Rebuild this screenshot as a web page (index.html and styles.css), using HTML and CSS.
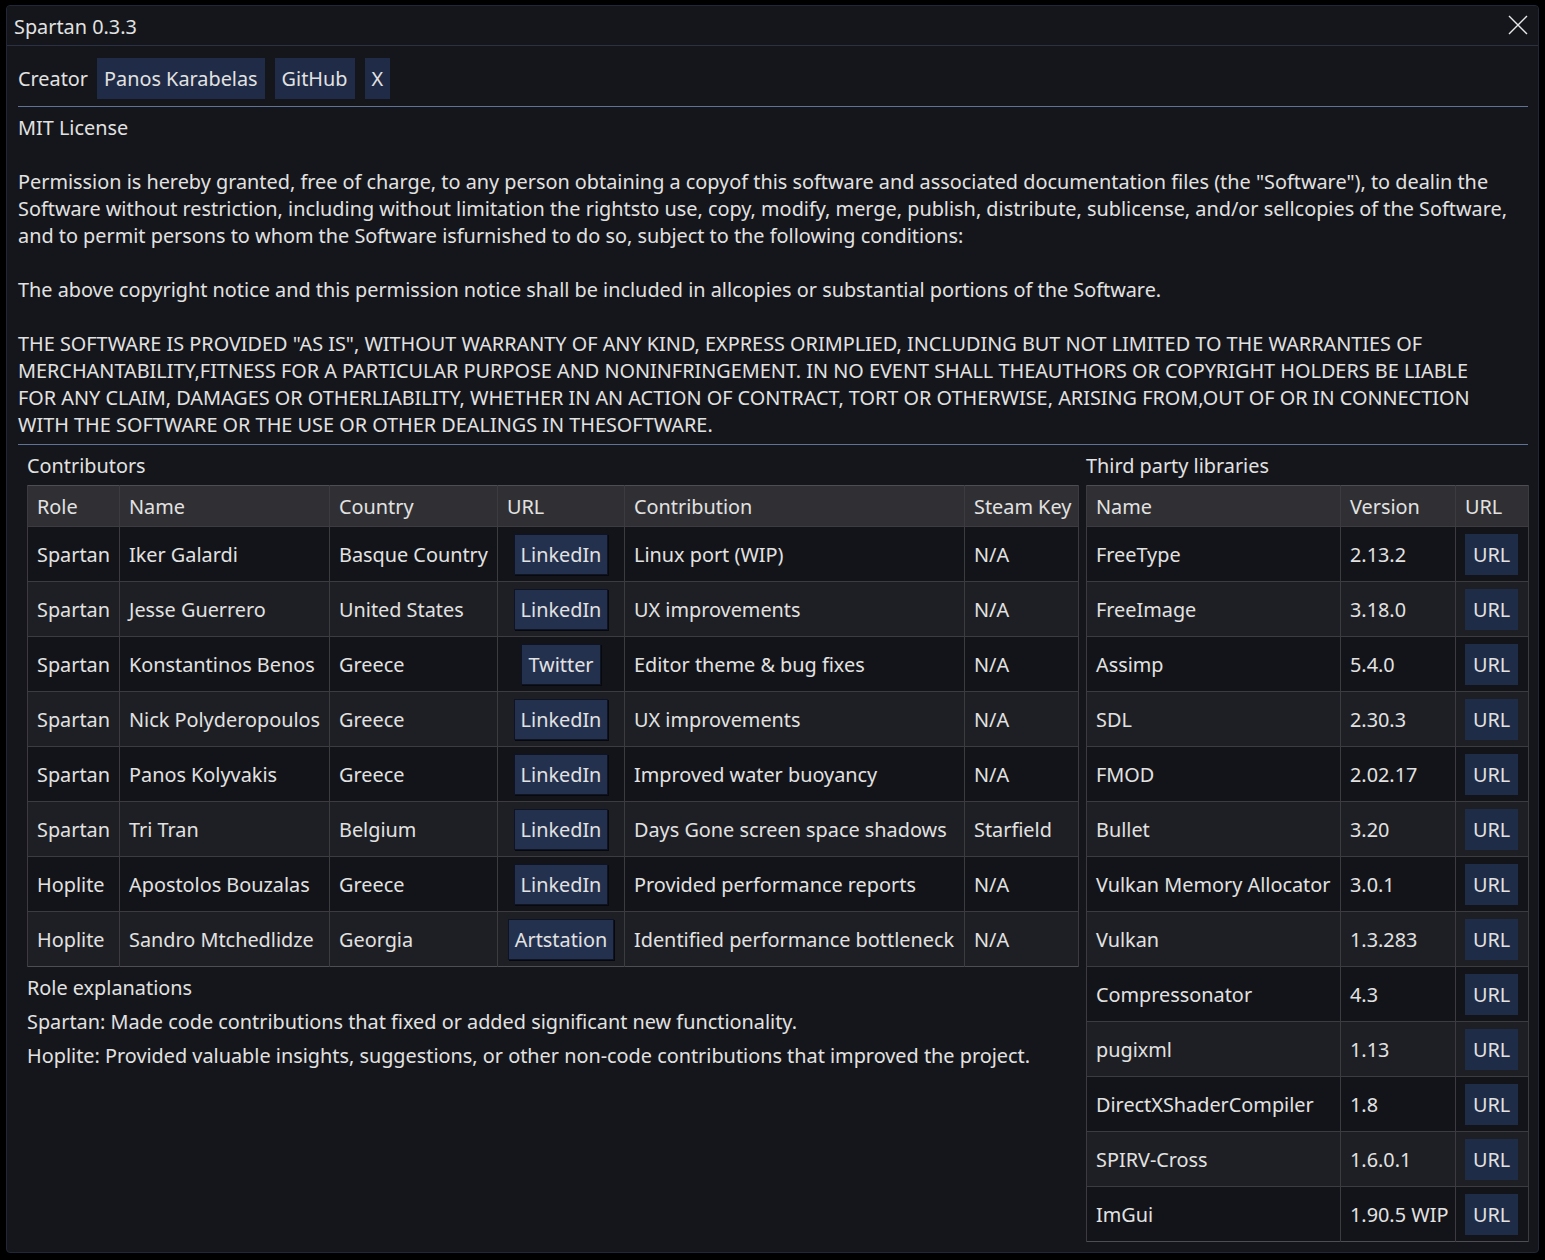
FILE: index.html
```html
<!DOCTYPE html>
<html lang="en">
<head>
<meta charset="utf-8">
<title>Spartan 0.3.3</title>
<link rel="stylesheet" href="styles.css">
</head>
<body>
<div class="window">
  <div class="titlebar">
    <span class="title">Spartan 0.3.3</span>
    <svg class="close" width="20" height="20" viewBox="0 0 20 20"><path d="M1 1 L19 19 M19 1 L1 19" stroke="#e8e8e8" stroke-width="1.4" fill="none"/></svg>
  </div>
  <div class="content">
    <div class="creator">
      <span class="label">Creator</span>
      <span class="btn">Panos Karabelas</span>
      <span class="btn">GitHub</span>
      <span class="btn">X</span>
    </div>
    <hr class="sep sep-top">
    <div class="license">MIT License<br><br>Permission is hereby granted, free of charge, to any person obtaining a copyof this software and associated documentation files (the "Software"), to dealin the<br>Software without restriction, including without limitation the rightsto use, copy, modify, merge, publish, distribute, sublicense, and/or sellcopies of the Software,<br>and to permit persons to whom the Software isfurnished to do so, subject to the following conditions:<br><br>The above copyright notice and this permission notice shall be included in allcopies or substantial portions of the Software.<br><br>THE SOFTWARE IS PROVIDED "AS IS", WITHOUT WARRANTY OF ANY KIND, EXPRESS ORIMPLIED, INCLUDING BUT NOT LIMITED TO THE WARRANTIES OF<br>MERCHANTABILITY,FITNESS FOR A PARTICULAR PURPOSE AND NONINFRINGEMENT. IN NO EVENT SHALL THEAUTHORS OR COPYRIGHT HOLDERS BE LIABLE<br>FOR ANY CLAIM, DAMAGES OR OTHERLIABILITY, WHETHER IN AN ACTION OF CONTRACT, TORT OR OTHERWISE, ARISING FROM,OUT OF OR IN CONNECTION<br>WITH THE SOFTWARE OR THE USE OR OTHER DEALINGS IN THESOFTWARE.</div>
    <hr class="sep sep-bottom">
    <div class="columns">
      <div class="left">
        <div class="heading">Contributors</div>
        <table class="grid contrib">
          <colgroup><col class="c1"><col class="c2"><col class="c3"><col class="c4"><col class="c5"><col class="c6"></colgroup>
          <thead><tr><th>Role</th><th>Name</th><th>Country</th><th>URL</th><th>Contribution</th><th>Steam Key</th></tr></thead>
          <tbody>
            <tr><td>Spartan</td><td>Iker Galardi</td><td>Basque Country</td><td class="center"><span class="lbtn">LinkedIn</span></td><td>Linux port (WIP)</td><td>N/A</td></tr>
            <tr><td>Spartan</td><td>Jesse Guerrero</td><td>United States</td><td class="center"><span class="lbtn">LinkedIn</span></td><td>UX improvements</td><td>N/A</td></tr>
            <tr><td>Spartan</td><td>Konstantinos Benos</td><td>Greece</td><td class="center"><span class="lbtn">Twitter</span></td><td>Editor theme &amp; bug fixes</td><td>N/A</td></tr>
            <tr><td>Spartan</td><td>Nick Polyderopoulos</td><td>Greece</td><td class="center"><span class="lbtn">LinkedIn</span></td><td>UX improvements</td><td>N/A</td></tr>
            <tr><td>Spartan</td><td>Panos Kolyvakis</td><td>Greece</td><td class="center"><span class="lbtn">LinkedIn</span></td><td>Improved water buoyancy</td><td>N/A</td></tr>
            <tr><td>Spartan</td><td>Tri Tran</td><td>Belgium</td><td class="center"><span class="lbtn">LinkedIn</span></td><td>Days Gone screen space shadows</td><td>Starfield</td></tr>
            <tr><td>Hoplite</td><td>Apostolos Bouzalas</td><td>Greece</td><td class="center"><span class="lbtn">LinkedIn</span></td><td>Provided performance reports</td><td>N/A</td></tr>
            <tr><td>Hoplite</td><td>Sandro Mtchedlidze</td><td>Georgia</td><td class="center"><span class="lbtn">Artstation</span></td><td>Identified performance bottleneck</td><td>N/A</td></tr>
          </tbody>
        </table>
        <div class="roles">
          <p>Role explanations</p>
          <p>Spartan: Made code contributions that fixed or added significant new functionality.</p>
          <p>Hoplite: Provided valuable insights, suggestions, or other non-code contributions that improved the project.</p>
        </div>
      </div>
      <div class="right">
        <div class="heading">Third party libraries</div>
        <table class="grid libs">
          <colgroup><col class="l1"><col class="l2"><col class="l3"></colgroup>
          <thead><tr><th>Name</th><th>Version</th><th>URL</th></tr></thead>
          <tbody>
            <tr><td>FreeType</td><td>2.13.2</td><td><span class="ubtn">URL</span></td></tr>
            <tr><td>FreeImage</td><td>3.18.0</td><td><span class="ubtn">URL</span></td></tr>
            <tr><td>Assimp</td><td>5.4.0</td><td><span class="ubtn">URL</span></td></tr>
            <tr><td>SDL</td><td>2.30.3</td><td><span class="ubtn">URL</span></td></tr>
            <tr><td>FMOD</td><td>2.02.17</td><td><span class="ubtn">URL</span></td></tr>
            <tr><td>Bullet</td><td>3.20</td><td><span class="ubtn">URL</span></td></tr>
            <tr><td>Vulkan Memory Allocator</td><td>3.0.1</td><td><span class="ubtn">URL</span></td></tr>
            <tr><td>Vulkan</td><td>1.3.283</td><td><span class="ubtn">URL</span></td></tr>
            <tr><td>Compressonator</td><td>4.3</td><td><span class="ubtn">URL</span></td></tr>
            <tr><td>pugixml</td><td>1.13</td><td><span class="ubtn">URL</span></td></tr>
            <tr><td>DirectXShaderCompiler</td><td>1.8</td><td><span class="ubtn">URL</span></td></tr>
            <tr><td>SPIRV-Cross</td><td>1.6.0.1</td><td><span class="ubtn">URL</span></td></tr>
            <tr><td>ImGui</td><td>1.90.5 WIP</td><td><span class="ubtn">URL</span></td></tr>
          </tbody>
        </table>
      </div>
    </div>
  </div>
</div>
</body>
</html>
```

FILE: styles.css
```css
* { box-sizing: border-box; }
html, body { margin: 0; padding: 0; background: #000; }
body {
  font-family: "Noto Sans", "Open Sans", sans-serif;
  font-size: 19.85px;
  color: #e2e2e2;
}
.window {
  margin: 5px 0 0 6px;
  width: 1533px;
  height: 1248px;
  background: #15161b;
  border: 1px solid #222738;
  border-radius: 4px;
  overflow: hidden;
}
.titlebar {
  height: 40px;
  display: flex;
  align-items: center;
  justify-content: space-between;
  padding: 0 10px 0 7px;
  background: #14161b;
  border-bottom: 1px solid #2a3142;
}
.title { line-height: 27px; margin-top: 1px; }
.close { display: block; margin-top: -1px; }
.content {
  padding: 12px 10px 0 11px;
}
.creator {
  display: flex;
  align-items: center;
  gap: 10px;
  height: 41px;
}
.creator .label { margin-right: -1px; }
.btn {
  display: flex;
  align-items: center;
  height: 41px;
  padding: 0 7px;
  background: #1f2b47;
}
.sep {
  border: 0;
  height: 1px;
  margin: 0;
  background: #5f7394;
}
.sep-top { margin-top: 7px; }
.license {
  margin-top: 7px;
  line-height: 27px;
  white-space: nowrap;
}
.sep-bottom { margin-top: 6px; }
.columns {
  display: flex;
  gap: 8px;
  margin-top: 7px;
}
.left { width: 1060px; padding-left: 9px; }
.right { width: 442px; }
.heading { line-height: 27px; margin-bottom: 6px; }
table.grid {
  border-collapse: collapse;
  table-layout: fixed;
  border: 1px solid #4d4d53;
}
.contrib { width: 1051px; }
.libs { width: 442px; }
.c1 { width: 92px; } .c2 { width: 210px; } .c3 { width: 168px; }
.c4 { width: 127px; } .c5 { width: 340px; } .c6 { width: 114px; }
.l1 { width: 254px; } .l2 { width: 115px; } .l3 { width: 73px; }
.grid th, .grid td {
  border-left: 1px solid #3b3b40;
  border-right: 1px solid #3b3b40;
  padding: 0 0 0 9px;
  text-align: left;
  font-weight: normal;
  white-space: nowrap;
  overflow: hidden;
}
.grid th {
  height: 41px;
  background: #303034;
  border-bottom: 1px solid #3b3b40;
}
.grid td {
  height: 55px;
  border-top: 1px solid #3b3b40;
}
.grid tbody tr:nth-child(odd) td { background: #131419; }
.grid tbody tr:nth-child(even) td { background: #1e1f24; }
.grid td.center { text-align: center; padding: 0; }
.lbtn {
  display: inline-flex;
  align-items: center;
  height: 41px;
  padding: 0 6px;
  background: #23314f;
  border: 1px solid #0e1423;
  box-shadow: 1px 1px 0 #08090c;
  vertical-align: middle;
}
.ubtn {
  display: inline-flex;
  align-items: center;
  height: 41px;
  padding: 0 8px;
  background: #1f2c48;
  vertical-align: middle;
}
.roles { margin-top: 7px; }
.roles p { margin: 0 0 7px; line-height: 27px; }
```
